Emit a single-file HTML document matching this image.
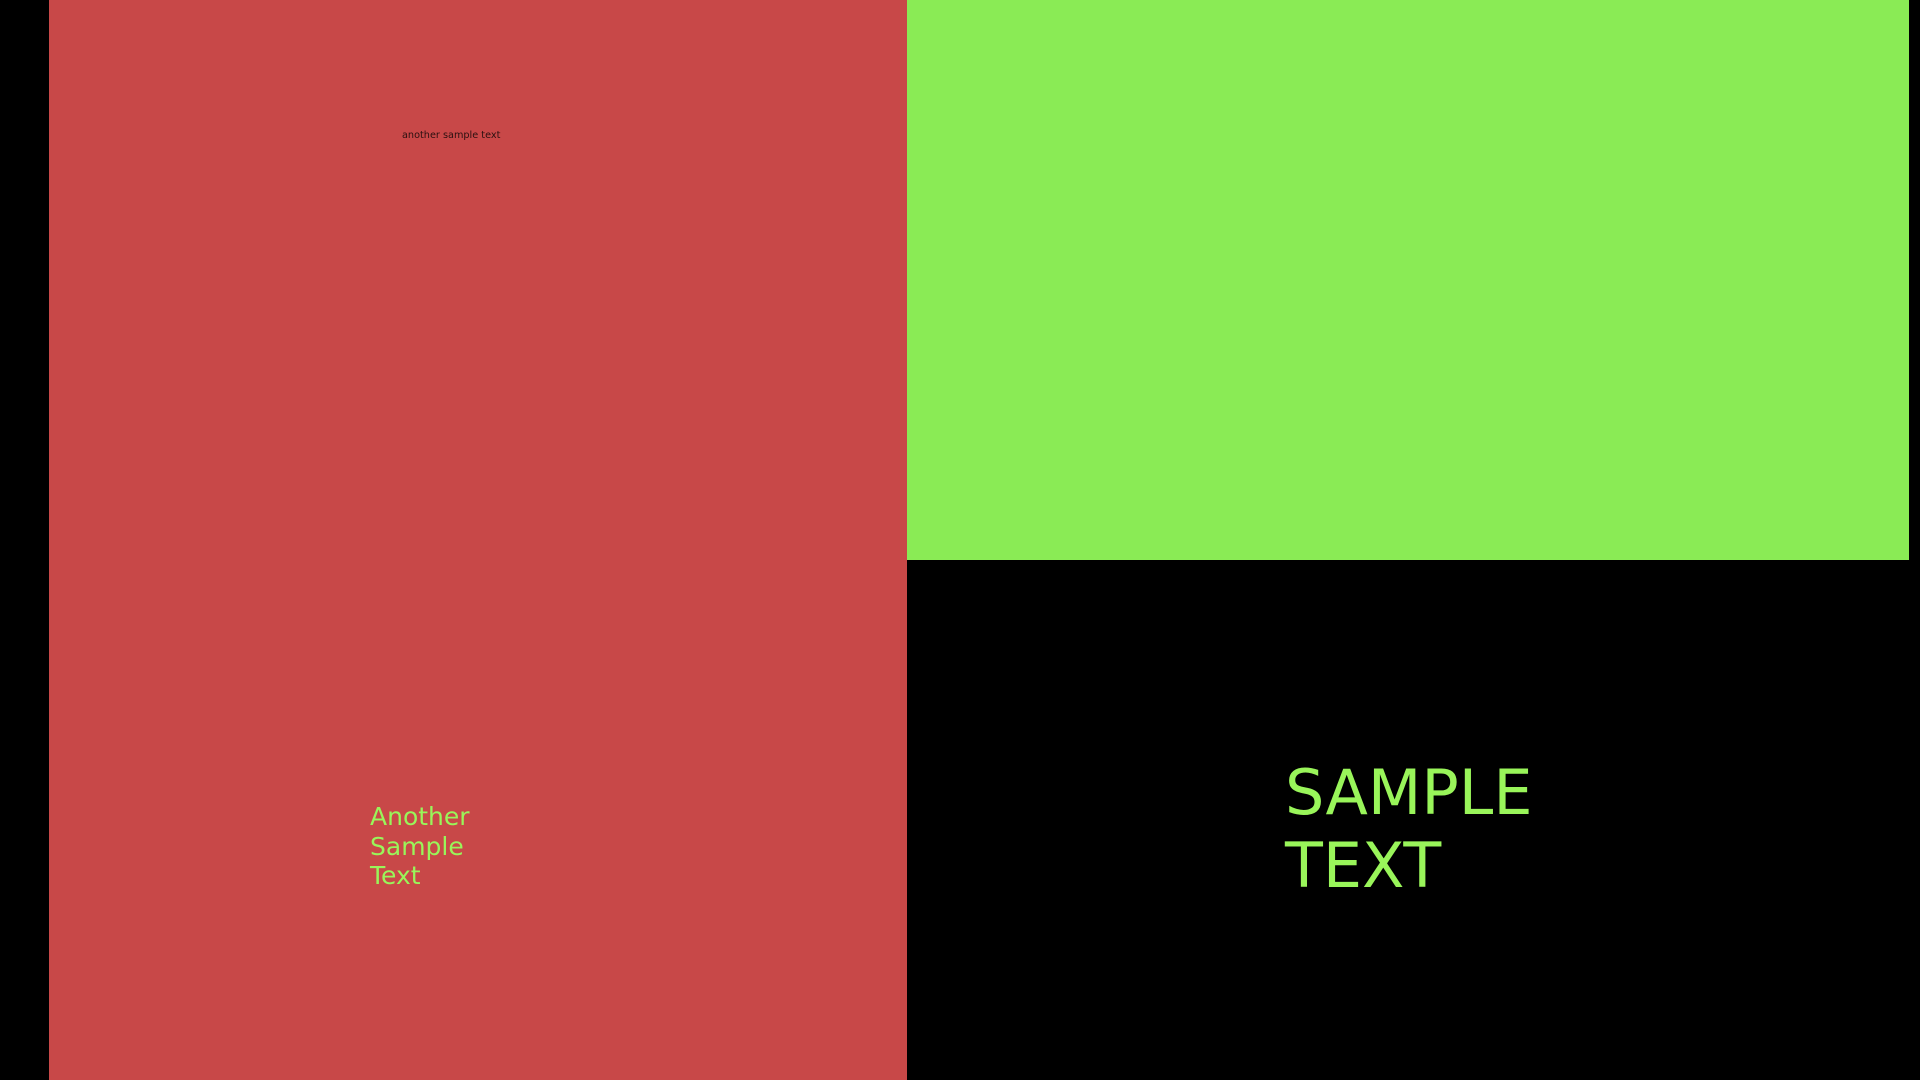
<!DOCTYPE html>
<html><head><meta charset="utf-8"><style>
html,body{margin:0;padding:0;width:1920px;height:1080px;background:#000;overflow:hidden;position:relative;font-family:"DejaVu Sans","Liberation Sans",sans-serif}
div{position:absolute}
.red{left:49px;top:0;width:858px;height:1080px;background:#c84848}
.green{left:907px;top:0;width:1002px;height:560px;background:#8aeb55}
.small{left:402px;top:130px;font-size:9.7px;line-height:12px;color:#2a1010;white-space:nowrap}
.another{left:370px;top:802px;font-size:25px;line-height:29.5px;color:#99f55a}
.big{left:1285px;top:756px;font-size:62px;line-height:73px;color:#99f55a}
</style></head><body>
<div class="red"></div>
<div class="green"></div>
<div class="small">another sample text</div>
<div class="another">Another<br>Sample<br>Text</div>
<div class="big">SAMPLE<br>TEXT</div>
</body></html>
